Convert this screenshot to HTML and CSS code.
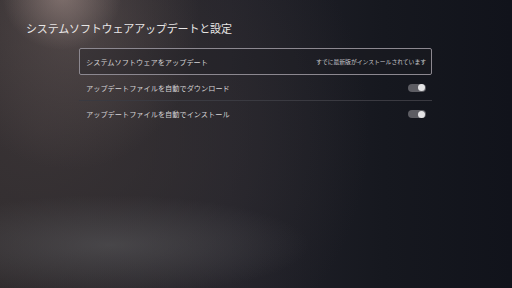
FILE: index.html
```html
<!DOCTYPE html>
<html lang="ja">
<head>
<meta charset="utf-8">
<link rel="stylesheet" href="styles.css">
</head>
<body>
<div class="screen">
  <h1 class="title">システムソフトウェアアップデートと設定</h1>
  <ul class="list">
    <li class="row focused">
      <span class="label">システムソフトウェアをアップデート</span>
      <span class="value">すでに最新版がインストールされています</span>
    </li>
    <li class="row">
      <span class="label">アップデートファイルを自動でダウンロード</span>
      <span class="toggle on"><span class="knob"></span></span>
    </li>
    <li class="row">
      <span class="label">アップデートファイルを自動でインストール</span>
      <span class="toggle on"><span class="knob"></span></span>
    </li>
  </ul>
</div>
</body>
</html>
```
FILE: styles.css
```css
html, body {
  margin: 0;
  padding: 0;
  width: 512px;
  height: 288px;
  overflow: hidden;
}
body {
  font-family: "Noto Sans CJK JP", "Noto Sans", sans-serif;
  color: #e6e6e6;
  background-color: #171920;
  background-image:
    radial-gradient(ellipse 60px 55px at 62px -5px, rgba(160,140,135,0.6), rgba(160,140,135,0) 100%),
    radial-gradient(ellipse 130px 150px at 70px 20px, rgba(110,96,94,0.5), rgba(110,96,94,0) 100%),
    radial-gradient(ellipse 200px 50px at 110px 245px, rgba(95,95,98,0.5), rgba(95,95,98,0) 100%),
    radial-gradient(ellipse 330px 300px at 40px 130px, rgba(58,52,54,0.9), rgba(58,52,54,0) 100%),
    linear-gradient(90deg, #2a2729 0%, #22222a 45%, #16181f 75%, #11131b 100%);
}
.screen {
  padding: 19px 0 0 26px;
}
.title {
  margin: 0;
  font-size: 11px;
  font-weight: 400;
  line-height: 19px;
  letter-spacing: -0.15px;
  color: #e8e6e6;
}
.list {
  list-style: none;
  margin: 10px 0 0 53px;
  padding: 0;
  width: 353px;
}
.row {
  display: flex;
  align-items: center;
  justify-content: space-between;
  height: 26px;
  padding: 0 6px 0 7px;
  box-sizing: border-box;
  border-bottom: 1px solid #3a3a41;
  margin: 0;
}
.row:last-child {
  border-bottom: none;
}
.row.focused {
  height: 27px;
  border: 1px solid #8c8890;
  border-radius: 2px;
  background: rgba(30,28,34,0.35);
  padding: 0 5px 0 6px;
}
.label {
  font-size: 7.2px;
  color: #d6d4d6;
  letter-spacing: 0;
}
.value {
  font-size: 5.8px;
  color: #c8c8cc;
}
.toggle {
  position: relative;
  width: 18px;
  height: 8px;
  border-radius: 4px;
  background: #5d5d63;
}
.knob {
  position: absolute;
  right: 1px;
  top: 0.5px;
  width: 7px;
  height: 7px;
  border-radius: 50%;
  background: #e4e4e6;
}
```
